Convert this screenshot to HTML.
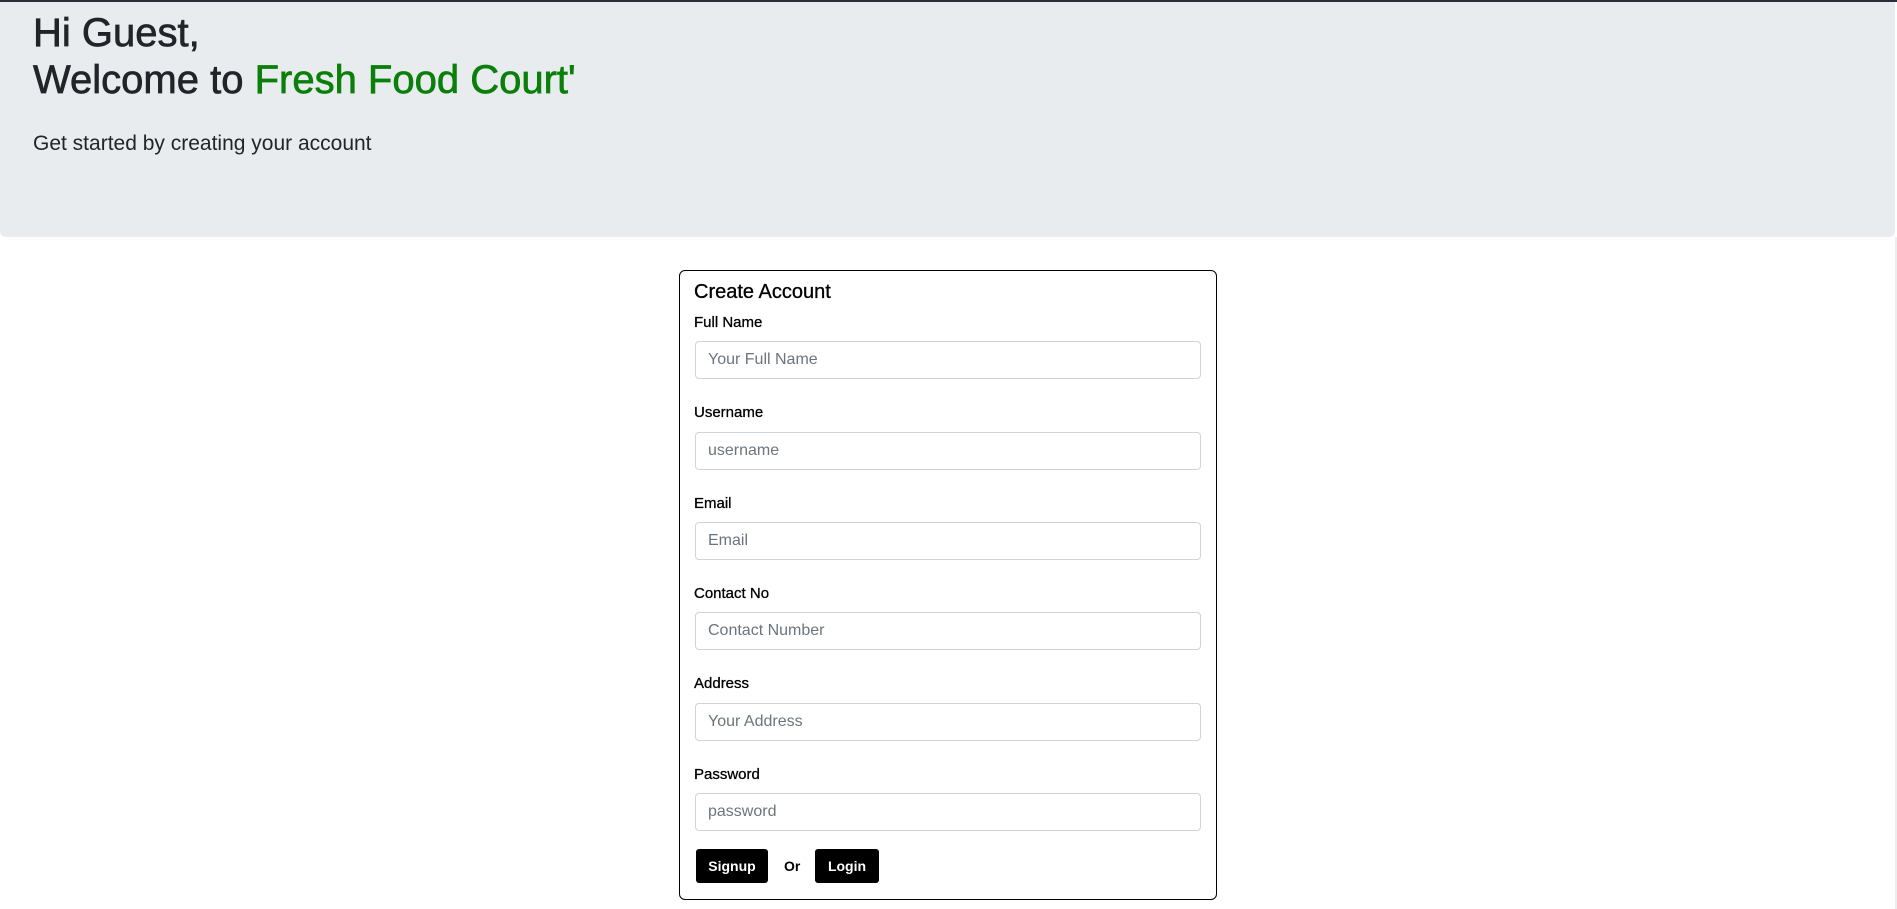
<!DOCTYPE html>
<html><head><meta charset="utf-8"><style>
*{box-sizing:border-box;margin:0;padding:0}
body{width:1897px;height:909px;background:#fff;font-family:"Liberation Sans",sans-serif;position:relative;overflow:hidden;color:#000}
.top{position:absolute;left:0;top:0;width:1897px;height:2px;background:#2b2d38}
.hdr{position:absolute;left:0;top:2px;width:1895px;height:235px;background:#e9ecef;border-radius:0 0 6px 6px}
.sb{position:absolute;left:1895px;top:237px;width:2px;height:672px;background:#eee}
.h1{position:absolute;left:33px;font-size:40px;line-height:46px;color:#212529;white-space:nowrap;-webkit-text-stroke:0.7px currentColor}
.sub{position:absolute;left:33px;top:131px;font-size:21px;line-height:26px;color:#212529;white-space:nowrap}
.card{position:absolute;left:679px;top:270px;width:538px;height:630px;border:1px solid #000;border-radius:6px}
.ct{position:absolute;left:694px;top:280px;font-size:20px;line-height:24px;white-space:nowrap;-webkit-text-stroke:0.3px #000}
.lbl{position:absolute;left:694px;font-size:15px;line-height:17px;white-space:nowrap;-webkit-text-stroke:0.3px #000}
.inp{position:absolute;left:695px;width:506px;height:38px;border:1px solid #ced4da;border-radius:4px;background:#fff;padding-left:12px;font-size:16px;line-height:36px;color:#6c757d;white-space:nowrap}
.btn{position:absolute;top:849px;height:34px;background:#000;color:#fff;font-weight:bold;font-size:14px;line-height:34px;text-align:center;border-radius:3px}
</style></head><body>
<div class="top"></div>
<div class="hdr"></div>
<div class="sb"></div>
<div class="h1" style="top:10px">Hi Guest,</div>
<div class="h1" style="top:57px">Welcome to <span style="color:#0a7f0a">Fresh Food Court'</span></div>
<div class="sub">Get started by creating your account</div>
<div class="card"></div>
<div class="ct">Create Account</div>

<div class="lbl" style="top:314px">Full Name</div>
<div class="inp" style="top:341px">Your Full Name</div>
<div class="lbl" style="top:404px">Username</div>
<div class="inp" style="top:432px">username</div>
<div class="lbl" style="top:495px">Email</div>
<div class="inp" style="top:522px">Email</div>
<div class="lbl" style="top:585px">Contact No</div>
<div class="inp" style="top:612px">Contact Number</div>
<div class="lbl" style="top:675px">Address</div>
<div class="inp" style="top:703px">Your Address</div>
<div class="lbl" style="top:766px">Password</div>
<div class="inp" style="top:793px">password</div>

<div class="btn" style="left:696px;width:72px">Signup</div>
<div style="position:absolute;left:784px;top:849px;line-height:34px;font-size:14px;font-weight:bold">Or</div>
<div class="btn" style="left:815px;width:64px">Login</div>
</body></html>
